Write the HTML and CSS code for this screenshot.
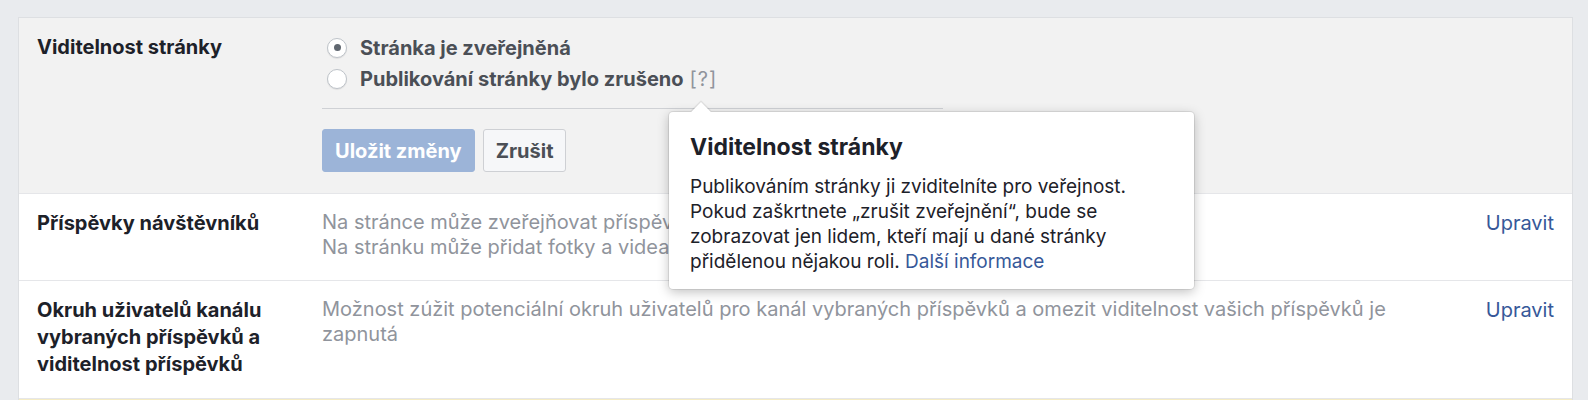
FILE: index.html
```html
<!DOCTYPE html>
<html lang="cs">
<head>
    <meta charset="UTF-8">
    <meta name="viewport" content="width=device-width, initial-scale=1.0">
    <title>Nastavení stránky</title>
    <link rel="stylesheet" href="styles.css">
</head>
<body>
    <div class="panel">
        <!-- Row being edited -->
        <div class="row editing">
            <div class="label">Viditelnost stránky</div>
            <div class="content">
                <label class="option">
                    <span class="radio checked"></span>
                    <span class="option-text">Stránka je zveřejněná</span>
                </label>
                <label class="option">
                    <span class="radio"></span>
                    <span class="option-text">Publikování stránky bylo zrušeno</span>
                    <span class="help">[?]</span>
                </label>
                <div class="divider"></div>
                <div class="actions">
                    <button class="btn btn-save" disabled>Uložit změny</button>
                    <button class="btn btn-cancel">Zrušit</button>
                </div>
            </div>
            <div class="edit"></div>
        </div>

        <div class="row">
            <div class="label">Příspěvky návštěvníků</div>
            <div class="content desc">
                <div>Na stránce může zveřejňovat příspěvky kdokoli</div>
                <div>Na stránku může přidat fotky a videa kdokoli</div>
            </div>
            <a class="edit" href="#">Upravit</a>
        </div>

        <div class="row">
            <div class="label">Okruh uživatelů kanálu<br>vybraných příspěvků a<br>viditelnost příspěvků</div>
            <div class="content desc">
                Možnost zúžit potenciální okruh uživatelů pro kanál vybraných příspěvků a omezit viditelnost vašich příspěvků je<br>zapnutá
            </div>
            <a class="edit" href="#">Upravit</a>
        </div>

        <div class="row notice"></div>

        <!-- Tooltip for the [?] help -->
        <div class="tooltip">
            <div class="tooltip-title">Viditelnost stránky</div>
            <p class="tooltip-text">
                Publikováním stránky ji zviditelníte pro veřejnost.<br>
                Pokud zaškrtnete „zrušit zveřejnění“, bude se<br>
                zobrazovat jen lidem, kteří mají u dané stránky<br>
                přidělenou nějakou roli. <a href="#">Další informace</a>
            </p>
        </div>
    </div>
</body>
</html>
```

FILE: styles.css
```css
body {
    font-family: 'Inter', 'Noto Sans', sans-serif;
    background-color: #e9ebee;
    margin: 0;
    padding: 17px 15px 0 18px;
    font-size: 20px;
    color: #1d2129;
}

.panel {
    position: relative;
    background-color: #fff;
    border: 1px solid #dddfe2;
    border-bottom: none;
}

.row {
    display: grid;
    grid-template-columns: 285px 1fr auto;
    padding: 16px 18px 20px 18px;
    border-bottom: 1px solid #e5e6e9;
}

.row.editing {
    background-color: #f2f2f2;
    padding-bottom: 21px;
}

.label {
    font-weight: 700;
    line-height: 27px;
    color: #1d2129;
}

.desc {
    color: #90949c;
    line-height: 25px;
}

.edit {
    color: #365899;
    text-decoration: none;
    line-height: 27px;
    padding-left: 40px;
}

/* radio options */
.option {
    display: flex;
    align-items: center;
    height: 27px;
    margin-bottom: 4px;
    padding-left: 5px;
}

.radio {
    width: 18px;
    height: 18px;
    border: 1px solid #bec3c9;
    border-radius: 50%;
    background-color: #fff;
    box-shadow: 0 1px 1px rgba(0, 0, 0, 0.08);
    display: flex;
    align-items: center;
    justify-content: center;
    margin-right: 13px;
}

.radio.checked::after {
    content: "";
    width: 7px;
    height: 7px;
    border-radius: 50%;
    background-color: #606770;
}

.option-text {
    font-weight: 700;
    color: #4b4f56;
}

.help {
    color: #90949c;
    margin-left: 6px;
    letter-spacing: 1px;
}

.divider {
    width: 621px;
    height: 1px;
    background-color: #cfd1d5;
    margin-top: 16px;
}

.actions {
    display: flex;
    gap: 8px;
    margin-top: 20px;
}

.btn {
    font-family: inherit;
    font-size: 20px;
    font-weight: 700;
    height: 43px;
    padding: 0 12px;
    border-radius: 3px;
    border: 1px solid;
}

.btn-save {
    background-color: #9cb4d8;
    border-color: #9cb4d8;
    color: #fff;
}

.btn-cancel {
    background-color: #f6f7f9;
    border-color: #ced0d4;
    color: #4b4f56;
}

.row.notice {
    background-color: #fffbe6;
    border-top: 1px solid #f5ecc4;
    border-bottom: none;
    height: 20px;
    padding: 0;
}

/* tooltip */
.tooltip {
    position: absolute;
    left: 650px;
    top: 94px;
    width: 483px;
    padding: 20px 21px 15px 21px;
    font-size: 19px;
    background-color: #fff;
    border-radius: 4px;
    box-shadow: 0 0 0 1px rgba(0, 0, 0, 0.08), 0 3px 12px rgba(0, 0, 0, 0.25);
}

.tooltip::before {
    content: "";
    position: absolute;
    left: 32px;
    top: -10px;
    width: 14px;
    height: 14px;
    background-color: #fff;
    transform: rotate(45deg);
    transform-origin: 0 0;
    box-shadow: -1px -1px 1px rgba(0, 0, 0, 0.1);
}

.tooltip-title {
    font-size: 23px;
    font-weight: 700;
    line-height: 30px;
}

.tooltip-text {
    margin: 12px 0 0;
    line-height: 25px;
}

.tooltip-text a {
    color: #365899;
    text-decoration: none;
}
```
